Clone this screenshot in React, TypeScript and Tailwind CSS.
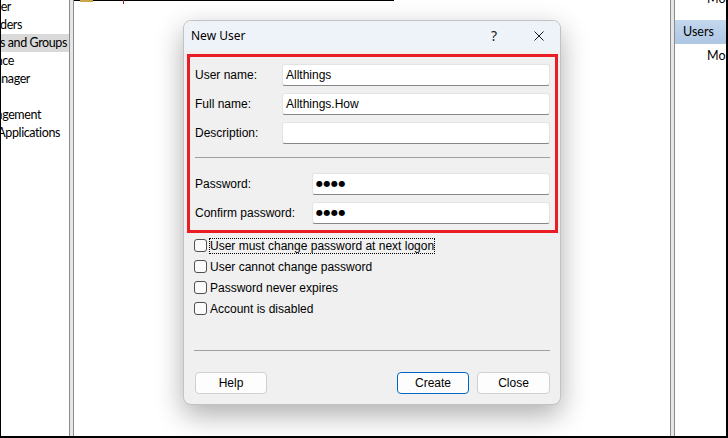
import React from "react";

const sys = "font-['Liberation_Sans',Arial,sans-serif]";

const treeRows: { text: string; end: number; selected?: boolean }[] = [
  { text: "Event Viewer", end: 10 },
  { text: "Shared Folders", end: 21 },
  { text: "Local Users and Groups", end: 66, selected: true },
  { text: "Performance", end: 13 },
  { text: "Device Manager", end: 29 },
  { text: "", end: 0 },
  { text: "Disk Management", end: 40 },
  { text: "Services and Applications", end: 59 },
];

function TreeRow({ text, end, selected }: { text: string; end: number; selected?: boolean }) {
  return (
    <div className={`flex h-[18px] items-center ${selected ? "bg-[#d9d9d9]" : ""}`}>
      <div className="flex justify-end" style={{ width: end }}>
        <span className="whitespace-nowrap text-[12.5px] leading-none tracking-[-0.4px] text-black">{text}</span>
      </div>
    </div>
  );
}

function Splitter() {
  return <div className="h-full w-[5px] shrink-0 border-x border-[#8c8c8c] bg-[#e6e6e6]" />;
}

function TextInput({ value, password }: { value?: string; password?: boolean }) {
  return (
    <div className="flex h-[22px] flex-1 items-center rounded-[3px] border border-[#e3e3e3] border-b-[#868686] bg-white px-[3px]">
      {password ? (
        <span className="font-['DejaVu_Sans',sans-serif] text-[8px] leading-none tracking-[0.5px] text-black">
          ●●●●
        </span>
      ) : (
        <span className="text-[12px] leading-none text-black">{value}</span>
      )}
    </div>
  );
}

function FieldRow({
  label,
  labelWidth,
  value,
  password,
}: {
  label: string;
  labelWidth: string;
  value?: string;
  password?: boolean;
}) {
  return (
    <div className="flex h-[22px] items-center">
      <span className={`${labelWidth} shrink-0 text-[12px] leading-none text-black`}>{label}</span>
      <TextInput value={value} password={password} />
    </div>
  );
}

function Check({ label, focused }: { label: string; focused?: boolean }) {
  return (
    <div className="flex h-[21px] items-center gap-[3px]">
      <div className="h-[13px] w-[13px] shrink-0 rounded-[3px] border border-[#4f4f4f] bg-[#fbfbfb]" />
      <span
        className={`text-[12px] leading-[14px] text-black ${
          focused ? "outline outline-1 outline-dotted outline-black" : ""
        }`}
      >
        {label}
      </span>
    </div>
  );
}

function Button({ label, primary }: { label: string; primary?: boolean }) {
  return (
    <div
      className={`flex h-[22px] items-center justify-center rounded-[4px] bg-[#fdfdfd] text-[12px] text-black ${
        primary ? "border border-[#0067c0]" : "border border-[#d0d0d0]"
      }`}
    >
      {label}
    </div>
  );
}

export default function App() {
  return (
    <div className="relative h-[438px] w-[728px] overflow-hidden border-b-2 border-l border-r-2 border-black bg-white font-['Lato',sans-serif]">
      <div className="flex h-full">
        {/* left tree pane */}
        <div className="w-[68px] shrink-0 overflow-hidden">
          <div className="mt-[-2px]">
            {treeRows.map((r, i) => (
              <TreeRow key={i} {...r} />
            ))}
          </div>
        </div>
        <Splitter />

        {/* middle list pane */}
        <div className="relative flex-1">
          <div className="h-px w-[320px] bg-black" />
          <div className="absolute left-[6px] top-0 h-[2px] w-[13px] bg-[#c9a64a]" />
          <div className="absolute left-[49px] top-0 h-[4px] w-px bg-[#8a2a2a]" />
        </div>
        <Splitter />

        {/* right actions pane */}
        <div className="w-[51px] shrink-0 overflow-hidden">
          <div className="h-[20px] overflow-hidden">
            <div className="mt-[-11px] whitespace-nowrap pl-[32px] text-[12.5px] leading-[20px] text-black">
              More Actions
            </div>
          </div>
          <div className="flex h-[24px] items-center bg-gradient-to-b from-[#c4d8ee] to-[#adc6e3] pl-[8px] text-[12.5px] text-black">
            Users
          </div>
          <div className="flex h-[25px] items-center whitespace-nowrap pl-[32px] text-[12.5px] text-black">
            More Actions
          </div>
        </div>
      </div>

      {/* New User dialog */}
      <div
        className={`absolute left-[182px] top-[20px] flex h-[385px] w-[378px] flex-col overflow-hidden rounded-[8px] border border-[#c2c2c2] bg-[#f0f0f0] shadow-[0_10px_28px_rgba(0,0,0,0.32)] ${sys}`}
      >
        <div className="flex h-[29px] shrink-0 items-center bg-[#eef3f9] pl-[7px]">
          <span className="font-['Noto_Sans',sans-serif] text-[12px] text-black">New User</span>
          <span className="ml-auto mr-[37px] font-['Noto_Sans',sans-serif] text-[14px] text-[#1a1a1a]">?</span>
          <svg width="10" height="10" viewBox="0 0 10 10" className="mr-[16px]">
            <path d="M0.5 0.5 L9.5 9.5 M9.5 0.5 L0.5 9.5" stroke="#1a1a1a" strokeWidth="1" />
          </svg>
        </div>

        <div className="ml-[3px] mr-[2px] mt-[4px] border-[3px] border-[#ec1c24] px-[5px] pb-[6px] pt-[7px]">
          <div className="flex flex-col gap-[7px]">
            <FieldRow label="User name:" labelWidth="w-[87px]" value="Allthings" />
            <FieldRow label="Full name:" labelWidth="w-[87px]" value="Allthings.How" />
            <FieldRow label="Description:" labelWidth="w-[87px]" value="" />
          </div>
          <div className="mt-[13px] border-t border-[#a0a0a0]" />
          <div className="mt-[15px] flex flex-col gap-[7px]">
            <FieldRow label="Password:" labelWidth="w-[117px]" password />
            <FieldRow label="Confirm password:" labelWidth="w-[117px]" password />
          </div>
        </div>

        <div className="ml-[10px] mt-[2px] flex flex-col">
          <Check label="User must change password at next logon" focused />
          <Check label="User cannot change password" />
          <Check label="Password never expires" />
          <Check label="Account is disabled" />
        </div>

        <div className="mx-[10px] mt-[31px] border-t border-[#a0a0a0]" />

        <div className="mx-[10px] mt-[21px] flex gap-[8px]">
          <div className="ml-[1px] w-[72px]">
            <Button label="Help" />
          </div>
          <div className="ml-auto w-[72px]">
            <Button label="Create" primary />
          </div>
          <div className="w-[73px]">
            <Button label="Close" />
          </div>
        </div>
      </div>
    </div>
  );
}
